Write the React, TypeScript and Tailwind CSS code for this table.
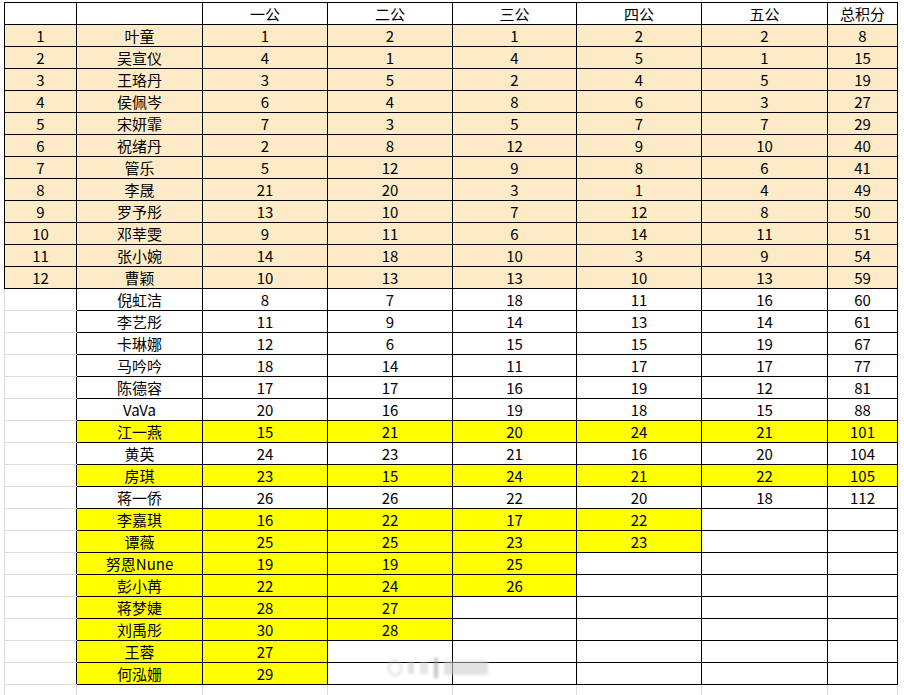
import React from "react";

const peach: [string, number[]][] = [
  ["叶童", [1, 2, 1, 2, 2, 8]],
  ["吴宣仪", [4, 1, 4, 5, 1, 15]],
  ["王珞丹", [3, 5, 2, 4, 5, 19]],
  ["侯佩岑", [6, 4, 8, 6, 3, 27]],
  ["宋妍霏", [7, 3, 5, 7, 7, 29]],
  ["祝绪丹", [2, 8, 12, 9, 10, 40]],
  ["管乐", [5, 12, 9, 8, 6, 41]],
  ["李晟", [21, 20, 3, 1, 4, 49]],
  ["罗予彤", [13, 10, 7, 12, 8, 50]],
  ["邓莘雯", [9, 11, 6, 14, 11, 51]],
  ["张小婉", [14, 18, 10, 3, 9, 54]],
  ["曹颖", [10, 13, 13, 10, 13, 59]],
];

// third value: number of yellow cells including the name cell
const rest: [string, (number | null)[], number][] = [
  ["倪虹洁", [8, 7, 18, 11, 16, 60], 0],
  ["李艺彤", [11, 9, 14, 13, 14, 61], 0],
  ["卡琳娜", [12, 6, 15, 15, 19, 67], 0],
  ["马吟吟", [18, 14, 11, 17, 17, 77], 0],
  ["陈德容", [17, 17, 16, 19, 12, 81], 0],
  ["VaVa", [20, 16, 19, 18, 15, 88], 0],
  ["江一燕", [15, 21, 20, 24, 21, 101], 7],
  ["黄英", [24, 23, 21, 16, 20, 104], 0],
  ["房琪", [23, 15, 24, 21, 22, 105], 7],
  ["蒋一侨", [26, 26, 22, 20, 18, 112], 0],
  ["李嘉琪", [16, 22, 17, 22, null, null], 5],
  ["谭薇", [25, 25, 23, 23, null, null], 5],
  ["努恩Nune", [19, 19, 25, null, null, null], 4],
  ["彭小苒", [22, 24, 26, null, null, null], 4],
  ["蒋梦婕", [28, 27, null, null, null, null], 3],
  ["刘禹彤", [30, 28, null, null, null, null], 3],
  ["王蓉", [27, null, null, null, null, null], 2],
  ["何泓姗", [29, null, null, null, null, null], 2],
];

const headers = ["一公", "二公", "三公", "四公", "五公", "总积分"];
const cell = "border border-black p-0 h-[22px] text-center align-middle leading-none";

export default function App() {
  return (
    <div
      className="relative w-[904px] h-[695px] bg-white overflow-hidden text-[15px] text-black"
      style={{ fontFamily: '"Noto Sans CJK SC", "Noto Sans", sans-serif' }}
    >
      <table className="ml-[4px] mt-[2px] border-collapse table-fixed w-[893px]">
        <colgroup>
          <col className="w-[72px]" />
          <col className="w-[126px]" />
          <col className="w-[125px]" />
          <col className="w-[125px]" />
          <col className="w-[124px]" />
          <col className="w-[125px]" />
          <col className="w-[126px]" />
          <col className="w-[70px]" />
        </colgroup>
        <tbody>
          <tr>
            <td className={cell}></td>
            <td className={cell}></td>
            {headers.map((h) => (
              <td key={h} className={cell}>
                {h}
              </td>
            ))}
          </tr>
          {peach.map(([name, vals], i) => (
            <tr key={name} className="bg-[#fdebc7]">
              <td className={cell}>{i + 1}</td>
              <td className={cell}>{name}</td>
              {vals.map((v, j) => (
                <td key={j} className={cell}>
                  {v}
                </td>
              ))}
            </tr>
          ))}
          {rest.map(([name, vals, y]) => (
            <tr key={name}>
              <td className="p-0 h-[22px] border-l border-b border-l-[#d9d9d9] border-b-[#dcdcdc]"></td>
              <td className={`${cell} ${y >= 1 ? "bg-[#ffff00]" : "bg-white"}`}>{name}</td>
              {vals.map((v, j) => (
                <td key={j} className={`${cell} ${j < y - 1 ? "bg-[#ffff00]" : "bg-white"}`}>
                  {v}
                </td>
              ))}
            </tr>
          ))}
          <tr>
            {Array.from({ length: 8 }).map((_, i) => (
              <td
                key={i}
                className={`p-0 h-[22px] border-l border-l-[#dcdcdc] ${i === 7 ? "border-r border-r-[#dcdcdc]" : ""}`}
              ></td>
            ))}
          </tr>
        </tbody>
      </table>
      <div className="absolute left-[388px] top-[658px] flex items-center gap-[6px] opacity-60 blur-[1.5px] pointer-events-none">
        <div className="w-[14px] h-[16px] rounded-full border-2 border-[#c8c8c8]" />
        <div className="w-[6px] h-[12px] bg-[#cfcfcf]" />
        <div className="w-[8px] h-[12px] bg-[#d6d6d6]" />
        <div className="w-[4px] h-[20px] bg-[#9a9a9a]" />
        <div className="w-[44px] h-[14px] bg-[#d0d0d0]" />
      </div>
    </div>
  );
}
